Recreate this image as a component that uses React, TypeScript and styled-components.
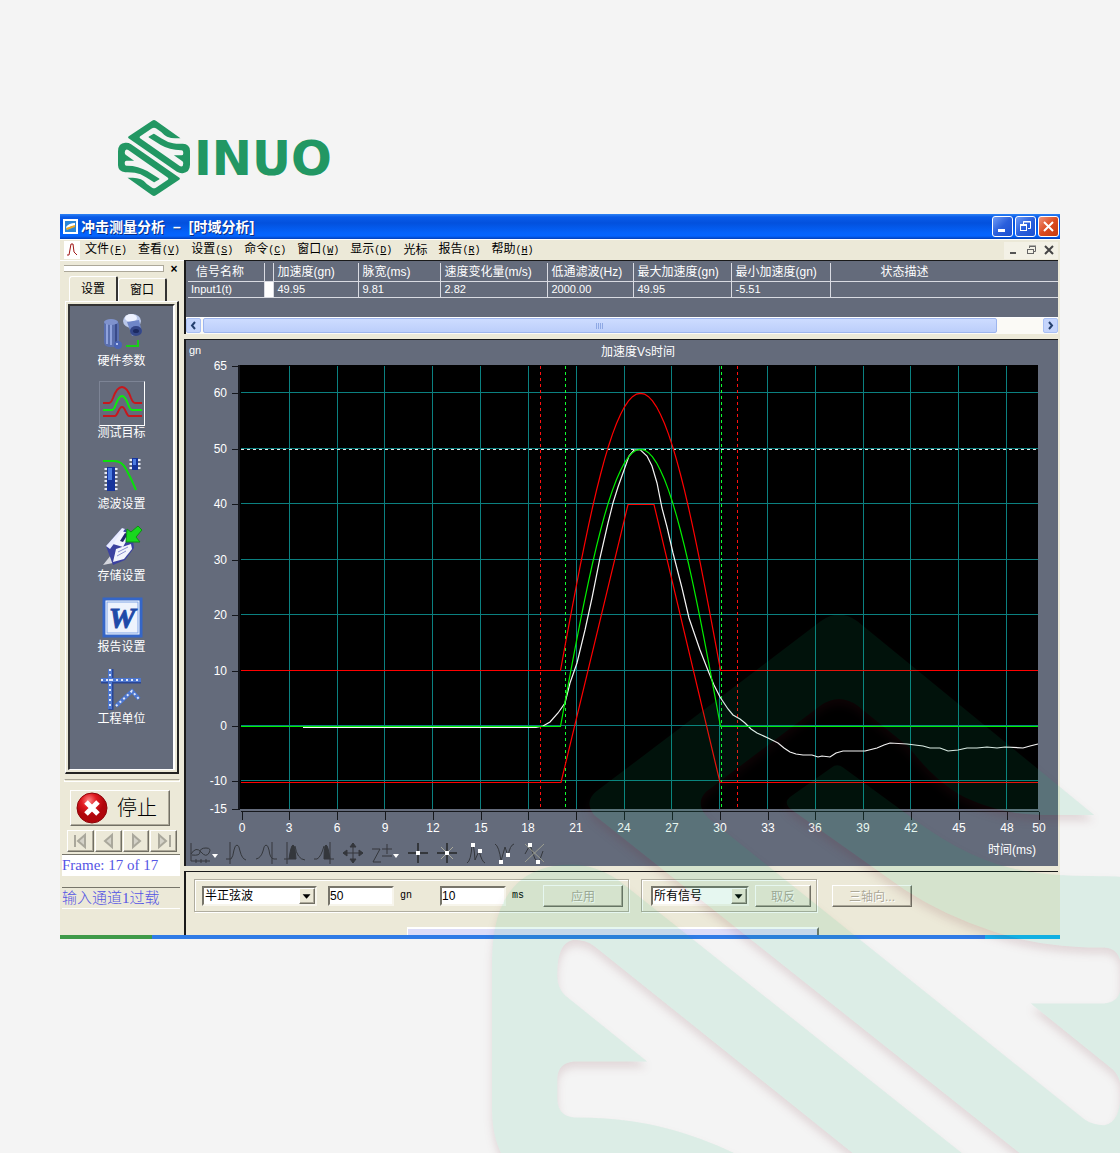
import React from "react";
import styled, { createGlobalStyle, css } from "styled-components";

const sans = `"Liberation Sans", "Noto Sans CJK SC", sans-serif`;
const mono = `"Liberation Mono", "Noto Sans CJK SC", monospace`;
const serif = `"Liberation Serif", "Noto Sans CJK SC", serif`;
const face = "#ece9d8";
const slate = "#646b7b";

const Global = createGlobalStyle`
  * { box-sizing: border-box; }
  body { margin: 0; background: #f4f4f4; font-family: ${sans}; font-size: 12px; color: #000; }
  button, input, select { font: inherit; margin: 0; }
`;

const raised = css`
  border: 1px solid;
  border-color: #fff #716f64 #716f64 #fff;
  box-shadow: inset -1px -1px #aca899;
`;
const sunken = css`
  border: 2px solid;
  border-color: #77756a #f7f5ec #f7f5ec #77756a;
`;

const Page = styled.div`
  position: relative;
  min-height: 100vh;
  padding: 120px 60px 60px;
  overflow: hidden;
`;
const Brand = styled.header`
  display: flex;
  align-items: center;
  gap: 4px;
  height: 76px;
  margin: 0 0 18px 58px;
  color: #229763;
`;
const BrandName = styled.span`
  font: bold 48px/72px "DejaVu Sans", sans-serif;
`;
const Watermark = styled.div`
  position: absolute;
  inset: 0;
  overflow: hidden;
  pointer-events: none;
  svg { position: absolute; left: 492px; top: 614px; overflow: visible; }
`;

const Window = styled.main`
  background: ${face};
`;
const TitleBar = styled.div`
  display: flex;
  align-items: center;
  gap: 2px;
  height: 25px;
  padding: 0 1px 0 3px;
  background: linear-gradient(#2f83f5 0, #0a5be8 3px, #0351dd 9px, #0463fb 19px, #0464ff 22px, #0340b8 25px);
`;
const Title = styled.h1`
  display: flex;
  flex: 1;
  gap: 8px;
  margin: 0 0 0 1px;
  color: #fff;
  font: bold 14px/20px ${sans};
  text-shadow: 1px 1px #0b2f87;
`;
const CaptionButton = styled.button<{ $close?: boolean }>`
  display: grid;
  place-items: center;
  width: 21px;
  height: 21px;
  padding: 0;
  border: 1px solid #fff;
  border-radius: 3px;
  background: ${(p) => (p.$close ? "linear-gradient(135deg,#f0937a,#dc4b20 50%,#c43a10)" : "linear-gradient(135deg,#6f9bf5,#2a5fdc 50%,#1b4fd0)")};
`;
const MenuBar = styled.nav`
  display: flex;
  align-items: center;
  height: 21px;
  padding: 0 2px 0 4px;
  border-top: 1px solid #fff;
`;
const MenuItems = styled.div`
  display: flex;
  flex: 1;
  gap: 11px;
  margin-left: 5px;
`;
const MenuItem = styled.button`
  padding: 0;
  border: 0;
  background: none;
  font: 12px/18px ${sans};
  white-space: nowrap;
  span { font: 10px/18px ${mono}; }
`;
const ChildButton = styled.button`
  display: grid;
  place-items: center;
  width: 18px;
  height: 17px;
  padding: 0;
  border: 0;
  background: #f3f1e6;
`;

const Body = styled.div`
  display: flex;
  align-items: stretch;
`;
const Side = styled.aside`
  display: flex;
  flex-direction: column;
  flex: 0 0 124px;
  border-top: 1px solid #fff;
`;
const Grip = styled.div`
  display: flex;
  align-items: center;
  gap: 4px;
  height: 15px;
  padding: 0 4px;
  &::before {
    content: "";
    flex: 1;
    height: 5px;
    border: 1px solid #aca899;
    border-width: 1px 1px 1px 0;
    background: #fff;
  }
  button { width: 12px; padding: 0; border: 0; background: none; font: bold 12px/12px ${sans}; }
`;
const Tabs = styled.div`
  display: flex;
  height: 25px;
  padding: 0 9px;
`;
const Tab = styled.button<{ $on?: boolean }>`
  width: 49px;
  padding: 0;
  margin-top: ${(p) => (p.$on ? 0 : 2)}px;
  border: solid;
  border-width: 1px 2px 0 1px;
  border-color: #fff #333 #333 #fff;
  border-radius: 3px 2px 0 0;
  background: ${face};
  font: 12px/22px ${sans};
`;
const ToolPanel = styled.div`
  margin: 0 5px;
  padding: 2px;
  border: solid;
  border-width: 1px 2px 2px 1px;
  border-color: #fff #222 #222 #fff;
`;
const ToolList = styled.div`
  display: grid;
  grid-auto-rows: 1fr;
  justify-items: center;
  height: 466px;
  padding: 3px 0 31px;
  border: solid;
  border-width: 2px 2px 1px;
  border-color: #333 #fff #fff #333;
  background: ${slate};
`;
const Tool = styled.button`
  display: flex;
  flex-direction: column;
  align-items: center;
  justify-content: flex-start;
  width: 60px;
  padding: 0;
  border: 0;
  background: none;
  color: #fff;
  font: 12px/14px ${sans};
`;
const ToolIcon = styled.span<{ $on?: boolean }>`
  width: 46px;
  height: 45px;
  border: 1px solid;
  border-color: ${(p) => (p.$on ? "#7d8495 #fff #fff #7d8495" : "transparent")};
  svg { display: block; }
`;
const Rule = styled.hr`
  height: 3px;
  margin: 5px 4px 8px;
  border: 1px solid #fff;
  border-top-color: #aca899;
`;
const Stop = styled.button`
  ${raised}
  display: flex;
  align-items: center;
  align-self: center;
  gap: 9px;
  width: 100px;
  height: 36px;
  margin-right: 4px;
  padding: 0 5px;
  background: ${face};
  font: 300 20px/32px ${serif};
`;
const Frames = styled.div`
  display: flex;
  gap: 1px;
  margin: 4px 7px 2px;
`;
const FrameButton = styled.button`
  ${raised}
  display: grid;
  place-items: center;
  flex: 1;
  height: 22px;
  padding: 0;
  background: ${face};
`;
const Status = styled.div<{ $white?: boolean }>`
  height: 22px;
  margin: 0 4px 11px 2px;
  border-top: 1px solid #77756a;
  border-bottom: 1px solid #fff;
  background: ${(p) => (p.$white ? "#fff" : face)};
  color: #5555e4;
  font: 300 15px/20px ${serif};
  white-space: nowrap;
`;

const Main = styled.div`
  display: flex;
  flex: 1;
  flex-direction: column;
  min-width: 0;
  gap: 5px;
`;
const Pane = styled.section<{ $dark?: boolean }>`
  margin-right: 2px;
  border: solid #1a1a1a;
  border-width: 1px 0 0 2px;
  background: ${(p) => (p.$dark ? slate : face)};
`;
const Signals = styled.table`
  width: calc(100% - 2px);
  margin: 2px 0 19px 2px;
  table-layout: fixed;
  border-collapse: collapse;
  color: #fff;
  th, td {
    height: 18px;
    padding: 0 0 0 4px;
    border-left: 1px solid #d9dbe2;
    border-bottom: 1px solid #d9dbe2;
    text-align: left;
    white-space: nowrap;
    overflow: hidden;
    font: 12px/16px ${sans};
  }
  td { height: 16px; font-size: 11px; line-height: 14px; }
  th:first-child { padding-left: 8px; border-left: 0; }
  td:first-child { padding-left: 3px; border-left: 0; }
  th:last-child { padding-left: 50px; }
`;
const Marker = styled.td`
  background: #fff;
`;
const ScrollBar = styled.div`
  display: flex;
  align-items: center;
  gap: 2px;
  height: 17px;
  border-top: 1px solid #fff;
  background: #fbfaf6;
`;
const ScrollButton = styled.button`
  display: grid;
  place-items: center;
  width: 15px;
  height: 15px;
  padding: 0;
  border: 1px solid #a9c0f4;
  border-radius: 2px;
  background: #c5d5fc;
`;
const Thumb = styled.div`
  display: grid;
  place-items: center;
  flex: 1;
  height: 15px;
  margin-right: 44px;
  border: 1px solid #9db5ee;
  border-radius: 2px;
  background: linear-gradient(#cddcff, #bccefa);
`;
const Plot = styled.svg`
  display: block;
  width: 100%;
  height: auto;
  font: 12px ${sans};
`;
const ToolRow = styled.div`
  display: flex;
  align-items: center;
  height: 27px;
  padding: 3px 22px 0 4px;
  gap: 7px;
`;
const CursorTool = styled.button<{ $menu?: boolean }>`
  width: ${(p) => (p.$menu ? 29 : 22)}px;
  height: 24px;
  padding: 0;
  border: 0;
  background: none;
  svg { display: block; }
`;
const AxisName = styled.span`
  margin: -10px 0 0 auto;
  color: #fff;
`;
const Controls = styled.form`
  display: flex;
  align-items: center;
  gap: 12px;
  height: 48px;
  padding: 0 8px;
`;
const Group = styled.div<{ $pad: number }>`
  display: flex;
  align-items: center;
  height: 33px;
  padding: 0 5px 0 ${(p) => p.$pad}px;
  border: 1px solid #b0ad9f;
  box-shadow: inset 1px 1px #fff, 1px 1px #fff;
`;
const Picker = styled.div<{ $w: number }>`
  ${sunken}
  position: relative;
  width: ${(p) => p.$w}px;
  height: 20px;
  select {
    display: block;
    width: 100%;
    height: 16px;
    padding: 0 18px 0 1px;
    border: 0;
    appearance: none;
    background: #fff;
    line-height: 16px;
  }
  svg { ${raised} position: absolute; top: 0; right: 0; background: ${face}; pointer-events: none; }
`;
const Field = styled.input`
  ${sunken}
  width: 66px;
  height: 20px;
  margin-left: 11px;
  padding: 0;
  background: #fff;
  & + label { width: 35px; padding-left: 6px; font: 10px/16px ${mono}; }
`;
const Push = styled.button<{ $w: number; $gap?: number }>`
  ${raised}
  width: ${(p) => p.$w}px;
  height: 22px;
  padding: 0;
  margin-left: ${(p) => p.$gap ?? 0}px;
  background: ${face};
  color: #aca899;
  text-shadow: 1px 1px #fff;
`;
const Tray = styled.div`
  width: 412px;
  max-width: 50%;
  height: 8px;
  margin: 7px 0 0 221px;
  border: solid;
  border-width: 2px 2px 0 1px;
  border-color: #fff #77756a #fff #fff;
  background: #dcdcf8;
`;
const TaskStrip = styled.div`
  display: flex;
  height: 4px;
  background: #2f7be6;
  &::before { content: ""; width: 92px; background: #3f9a48; }
  &::after { content: ""; width: 75px; margin-left: auto; background: #12b0f0; }
`;

/* One arm of the emblem; the second is the same arm turned half way round. */
const arm =
  "M835 78 Q880 45 925 78 L1505 552 L1380 552 Q1280 552 1190 510 Q1120 475 1050 385 L925 284 Q880 252 835 284 L555 495 Q525 525 560 560 " +
  "L1480 1297 Q1500 1312 1530 1312 Q1570 1305 1570 1230 Q1572 1195 1550 1175 L1350 1014 L1530 1014 Q1570 1010 1570 970 L1570 920 Q1568 880 1530 877 " +
  "Q1380 878 1260 838 Q1140 800 1040 735 L758 535 Q745 520 760 508 L862 436 Q875 425 890 436 L1060 560 Q1200 665 1330 688 Q1400 702 1500 702 L1560 703 " +
  "Q1725 715 1730 890 L1730 1270 Q1725 1480 1560 1495 Q1490 1505 1420 1458 L280 552 Q255 520 285 495 Z";

function Emblem({ width, height, ghost }: { width: number; height: number; ghost?: boolean }) {
  return (
    <svg width={width} height={height} viewBox="30 60 1700 2050" preserveAspectRatio="none" aria-hidden="true">
      {ghost && (
        <filter id="ghost" x="-10%" y="-10%" width="120%" height="120%" colorInterpolationFilters="sRGB">
          <feOffset in="SourceAlpha" dx="0" dy="14" result="o" />
          <feGaussianBlur in="o" stdDeviation="10" result="b" />
          <feComposite in="b" in2="SourceAlpha" operator="out" result="c" />
          <feColorMatrix in="c" values="0 0 0 0 .4  0 0 0 0 .1  0 0 0 0 .15  0 0 0 .13 0" result="s" />
          <feColorMatrix in="SourceGraphic" values="1 0 0 0 0  0 1 0 0 0  0 0 1 0 0  0 0 0 .1 0" result="g" />
          <feMerge><feMergeNode in="s" /><feMergeNode in="g" /></feMerge>
        </filter>
      )}
      <g fill={ghost ? "#08b470" : "currentColor"} filter={ghost ? "url(#ghost)" : undefined}>
        <path d={arm} />
        <path d={arm} transform="rotate(180 880 1085)" />
      </g>
    </svg>
  );
}

const menus: [string, string?][] = [
  ["文件", "F"], ["查看", "V"], ["设置", "S"], ["命令", "C"], ["窗口", "W"], ["显示", "D"], ["光标"], ["报告", "R"], ["帮助", "H"],
];

const Chip = ({ x, y, w, h }: { x: number; y: number; w: number; h: number }) => (
  <g>
    <path d={`M${x - 1} ${y + 1}V${y + h}M${x + w + 1} ${y + 1}V${y + h}`} stroke="#e6e9f5" strokeWidth="3" strokeDasharray="2 2" />
    <rect x={x} y={y} width={w} height={h} fill="#16349c" />
    <rect x={x + 1} y={y + 1} width={w / 2} height={h / 2} fill="#4b7be0" />
  </g>
);

const tools: { name: string; on?: boolean; art: React.ReactNode }[] = [
  {
    name: "硬件参数",
    art: (
      <>
        <rect x="4" y="10" width="15" height="27" rx="5" fill="#5a6fae" />
        <path d="M7 14v20M11 14v21" stroke="#8fa2dc" strokeWidth="2" />
        <path d="M16 14v20" stroke="#3a4b8a" strokeWidth="2" />
        <ellipse cx="11" cy="12" rx="7" ry="3" fill="#7f92cd" />
        <circle cx="18" cy="35" r="4" fill="#4a63b4" /><circle cx="17" cy="34" r="1" fill="#cfdcff" />
        <ellipse cx="32" cy="11" rx="9" ry="7" fill="#b9c7ea" /><ellipse cx="31" cy="8" rx="6" ry="4" fill="#eef2ff" />
        <path d="M27 12l12-2 3 12-10 4z" fill="#6f86c8" /><ellipse cx="36" cy="21" rx="6" ry="5" fill="#344688" /><ellipse cx="36" cy="21" rx="3" ry="2" fill="#1c2960" />
        <path d="M26 36H38V30" fill="none" stroke="#18d018" strokeWidth="2" />
      </>
    ),
  },
  {
    name: "测试目标", on: true,
    art: (
      <g fill="none" strokeWidth="2">
        <path d="M3 21h6q2 0 4-5 4-11 9-11t9 11q2 5 4 5h7" stroke="#c8171c" />
        <path d="M3 28h9q2 0 4-6 3-8 6-8t6 8q2 6 4 6h10" stroke="#0aef0a" />
        <path d="M3 34h12q1 0 3-4 2-5 4-5t4 5q2 4 3 4h13" stroke="#c8171c" />
      </g>
    ),
  },
  {
    name: "滤波设置",
    art: (
      <>
        <path d="M3 8h11q8 0 12 8 5 9 10 21" fill="none" stroke="#0ae00a" strokeWidth="2" />
        <Chip x={7} y={14} w={8} h={24} />
        <Chip x={32} y={5} w={6} h={12} />
      </>
    ),
  },
  {
    name: "存储设置",
    art: (
      <>
        <path d="M3 40l8-10 7 7z" fill="#d5d7de" />
        <path d="M6 21L22 3l10 4 2 16-9 12-12 5z" fill="#3c42a0" />
        <path d="M6 21L22 3l3 1L10 24z" fill="#e8ebff" />
        <path d="M13 19l9-13 8 3-7 13z" fill="#f2f4ff" /><path d="M20 16l5-8 3 1-5 8z" fill="#22286e" />
        <path d="M13 37l3-13 15-5 1 5-8 10z" fill="#f3f4fc" /><path d="M18 27l10-5M17 31l9-5" stroke="#8b90d0" />
        <path d="M26 17l1-13 4 3 7-6 4 4-6 7 4 5z" fill="#18d81e" stroke="#0b9212" strokeWidth="1" />
      </>
    ),
  },
  {
    name: "报告设置",
    art: (
      <>
        <rect x="4" y="3" width="37" height="37" fill="#fff" stroke="#3566c8" strokeWidth="3" />
        <rect x="7" y="6" width="31" height="31" fill="#eef3fd" stroke="#7fa3e6" />
        <text x="22" y="32" textAnchor="middle" fontSize="30" fontWeight="bold" fontStyle="italic" fontFamily="Liberation Serif, serif" fill="#1f4aa8" stroke="#1f4aa8">W</text>
      </>
    ),
  },
  {
    name: "工程单位",
    art: (
      <>
        <path d="M1 13H41M11 1V42" stroke="#2b4795" strokeWidth="5" />
        <path d="M1 12H41M10 1V41M16 38L32 23 39 31" fill="none" stroke="#4c76cf" strokeWidth="4" />
        <path d="M1 12H41M10 1V41M16 38L32 23 39 31" fill="none" stroke="#dfe8fb" strokeWidth="2" strokeDasharray="2 3" />
      </>
    ),
  },
];

const columns = [76, 9, 85, 82, 107, 86, 98, 99];

const X = (ms: number) => 241.5 + ms * 15.94;
const Y = (g: number) => 726 - g * 5.545;
const halfSine = (base: number, amp: number) => {
  const level = Math.round(Y(base)) - 0.5;
  const rise = 5.545 * amp;
  const pts: string[] = [];
  for (let i = 0; i <= 40; i++) pts.push(`${560.5 + i * 4},${(level - rise * Math.sin((Math.PI * i) / 40)).toFixed(1)}`);
  return `M241 ${level}L${pts.join("L")}H1038`;
};
const measured =
  "303,727.5 536,727.5 543,726 550,722 558,713 565,703 570,683 577,663 585,630 592,598 600,558 608,523 613,503 618,487 623,473 629,456 634,450 640,449.5 647,456 652,466 657,483 662,508 667,527 673,553 682,588 689,618 700,650 709,673 714,685 720,697 728,709 733,715 740,719 745,723 751,729 757,733 768,738 778,743 784,748 790,752 796,754 803,755 812,755 818,757 822,756 830,757 836,753 843,751 865,751 877,748 884,745 890,743 907,744 923,746 930,748 940,748 948,751 958,750 967,748 977,748 987,747 997,748 1005,747 1023,748 1030,746 1038,744";

function Chart() {
  const xs = [0, 3, 6, 9, 12, 15, 18, 21, 24, 27, 30, 33, 36, 39, 42, 45, 48, 50];
  const ys = [65, 60, 50, 40, 30, 20, 10, 0, -10, -15];
  return (
    <Plot viewBox="186 340 872 499" role="img" aria-label="加速度Vs时间">
      <rect x="240" y="365" width="798" height="444" fill="#000" />
      <g stroke="#0b8080" shapeRendering="crispEdges">
        {xs.slice(1, -1).map((v) => <path key={v} d={`M${Math.floor(X(v))}.5 366V809`} />)}
        {ys.slice(1, -1).map((v) => <path key={v} d={`M241 ${Math.round(Y(v)) - 1}.5H1038`} />)}
      </g>
      <g fill="none" strokeDasharray="3 3" shapeRendering="crispEdges">
        <path d="M241 449.5H1038" stroke="#e8e8e8" />
        <path d="M540.5 366V809M737.5 366V809" stroke="#ff1010" />
        <path d="M565.5 366V809M721.5 366V809" stroke="#10ff30" />
      </g>
      <g fill="none" strokeWidth="1.2">
        <path d={halfSine(10, 50)} stroke="#ff0000" />
        <path d="M241 782.5H561L628 504.5H654L720 782.5H1038" stroke="#ff0000" />
        <polyline points={measured} stroke="#f4f4f4" />
        <path d={halfSine(0, 50)} stroke="#00f000" transform="translate(0 1)" />
      </g>
      <g stroke="#15171c" shapeRendering="crispEdges">
        <path d="M239 365V810" strokeWidth="2" />
        <path d="M241 811.5H1039" />
        {ys.map((v) => <path key={v} d={`M232 ${Math.min(809, Math.round(Y(v)))}.5H239`} />)}
        {xs.map((v) => <path key={v} d={`M${Math.round(X(v))}.5 812V820`} />)}
      </g>
      <g fill="#fff">
        <text x="189" y="354" fontSize="11">gn</text>
        <text x="638" y="356" textAnchor="middle">加速度Vs时间</text>
        {ys.map((v) => <text key={v} x="227" y={Math.round(Y(v)) + 4} textAnchor="end">{v}</text>)}
        {xs.map((v) => <text key={v} x={Math.round(X(v))} y="832" textAnchor="middle">{v}</text>)}
      </g>
    </Plot>
  );
}

const dot = (x: number, y: number) => <rect x={x - 2} y={y - 2} width="4" height="4" fill="#fff" stroke="none" />;
const cursorTools: { name: string; menu?: boolean; art: React.ReactNode }[] = [
  { name: "曲线", menu: true, art: <><path d="M1 1V19H20M1 12Q6 4 11 10T19 11 16 6 10 10 2 13M6 17v4M11 17v4M16 17v4" /><path d="M22 12h6l-3 4z" fill="#fff" stroke="none" /></> },
  { name: "左光标", art: <path d="M4 0V22M0 17H5Q7 15 8 8 9 3 11 3T14 9Q16 17 20 18" /> },
  { name: "右光标", art: <path d="M17 0V22M1 17Q6 16 8 9 9 3 11 3T14 8Q15 17 19 17H22" /> },
  { name: "左区间", art: <><path d="M3 0V22M0 17H5M11 4Q13 17 21 18" /><path d="M5 17Q7 3 9 3T12 17z" fill="#34373c" /></> },
  { name: "右区间", art: <><path d="M17 0V22M1 17H4Q8 15 11 4M17 17H21" /><path d="M11 17Q11 3 13 3T17 17z" fill="#34373c" /></> },
  { name: "移动", art: <path d="M1 11H21M11 1V21M1 11l4-3v6zM21 11l-4-3v6zM11 1l-3 4h6zM11 21l-3-4h6z" fill="#34373c" /> },
  { name: "缩放", menu: true, art: <><path d="M1 7H9L2 20H10M11 7H21M16 2V12M11 14H21" /><path d="M22 12h6l-3 4z" fill="#fff" stroke="none" /></> },
  { name: "单光标", art: <><path d="M1 11H21M11 1V21" strokeWidth="2" />{dot(11, 11)}</> },
  { name: "跟踪光标", art: <><path d="M1 11H21M11 1V21" strokeWidth="2" /><path d="M5 5L17 17M17 5L5 17" stroke="#a9a99b" />{dot(11, 11)}</> },
  { name: "峰值", art: <><path d="M2 21Q6 19 7 3 9 2 10 18L14 9Q17 20 20 21" />{dot(8, 3)}{dot(15, 9)}</> },
  { name: "谷值", art: <><path d="M1 2Q5 4 7 19L11 5 14 14Q16 3 20 2" />{dot(7, 20)}{dot(14, 13)}</> },
  { name: "清除", art: <><path d="M2 12L7 3 12 17 16 20 20 9" /><path d="M2 2L21 20M21 2L2 20" stroke="#9c9e90" />{dot(7, 3)}{dot(15, 20)}</> },
];

const Arrow = () => (
  <svg width="16" height="16" viewBox="0 0 16 16" aria-hidden="true"><path d="M3 6h9L7.500 11z" /></svg>
);

export default function App() {
  return (
    <Page>
      <Global />
      <Brand aria-label="SINUO">
        <Emblem width={72} height={76} />
        <BrandName>INUO</BrandName>
      </Brand>
      <Window>
        <TitleBar>
          <svg width="15" height="15" viewBox="0 0 15 15" aria-hidden="true">
            <rect x="1" y="1" width="13" height="13" fill="#2b86d8" stroke="#fff" strokeWidth="2" />
            <path d="M3 8Q6 4 12 4V7Q8 6 4 11z" fill="#fff" /><path d="M3 9L12 6V8L4 11z" fill="#f3a81c" />
          </svg>
          <Title><span>冲击测量分析</span><span>–</span><span>[时域分析]</span></Title>
          <CaptionButton aria-label="最小化"><svg width="15" height="15"><rect x="3" y="10" width="7" height="3" fill="#fff" /></svg></CaptionButton>
          <CaptionButton aria-label="还原">
            <svg width="15" height="15" fill="none" stroke="#fff"><path d="M5.500 5V2.500H12.500V9.500H10M5 3H13" /><rect x="2.500" y="6.500" width="6" height="5" /><path d="M2 6H9" strokeWidth="2" /></svg>
          </CaptionButton>
          <CaptionButton $close aria-label="关闭"><svg width="15" height="15"><path d="M3 3L12 12M12 3L3 12" stroke="#fff" strokeWidth="2" /></svg></CaptionButton>
        </TitleBar>
        <MenuBar>
          <svg width="16" height="18" viewBox="0 0 16 18" aria-hidden="true"><rect width="16" height="18" fill="#fff" /><path d="M3 14H5L7 3H9L10 11 13 14" fill="none" stroke="#a01818" /></svg>
          <MenuItems>
            {menus.map(([t, k]) => (
              <MenuItem key={t}>{t}{k && <span>(<u>{k}</u>)</span>}</MenuItem>
            ))}
          </MenuItems>
          <ChildButton aria-label="最小化文档"><svg width="10" height="10"><rect x="2" y="7" width="6" height="2" fill="#555" /></svg></ChildButton>
          <ChildButton aria-label="还原文档"><svg width="11" height="10" fill="none" stroke="#666"><path d="M3.500 3V1.500H9.500V6.500H8M3 1H10" /><rect x="1.500" y="4.500" width="6" height="4" /></svg></ChildButton>
          <ChildButton aria-label="关闭文档"><svg width="10" height="10"><path d="M1 1L9 9M9 1L1 9" stroke="#444" strokeWidth="2" /></svg></ChildButton>
        </MenuBar>
        <Body>
          <Side>
            <Grip><button aria-label="关闭面板">×</button></Grip>
            <Tabs><Tab $on>设置</Tab><Tab>窗口</Tab></Tabs>
            <ToolPanel>
              <ToolList>
                {tools.map((t) => (
                  <Tool key={t.name}>
                    <ToolIcon $on={t.on}><svg width="44" height="43" viewBox="0 0 44 43" aria-hidden="true">{t.art}</svg></ToolIcon>
                    {t.name}
                  </Tool>
                ))}
              </ToolList>
            </ToolPanel>
            <Rule />
            <Stop>
              <svg width="32" height="32" viewBox="0 0 32 32" aria-hidden="true">
                <defs><radialGradient id="red" cx=".4" cy=".25"><stop offset="0" stopColor="#f88" /><stop offset=".5" stopColor="#e01a20" /><stop offset="1" stopColor="#b0060c" /></radialGradient></defs>
                <circle cx="16" cy="16" r="15" fill="url(#red)" stroke="#8c0509" /><path d="M10 10L22 22M22 10L10 22" stroke="#fff" strokeWidth="5" />
              </svg>
              停止
            </Stop>
            <Frames>
              {[["首帧", "M6 4V16M16 4V16L9 10z"], ["上一帧", "M15 4V16L8 10z"], ["下一帧", "M8 4V16L15 10z"], ["末帧", "M6 4V16L13 10zM17 4V16"]].map(([n, d]) => (
                <FrameButton key={n} aria-label={n}><svg width="22" height="20"><path d={d} fill="#d4d2c8" stroke="#aaa89c" strokeWidth="2" /></svg></FrameButton>
              ))}
            </Frames>
            <Status $white>Frame: 17 of 17</Status>
            <Status>输入通道1过载</Status>
          </Side>
          <Main>
            <Pane $dark>
              <Signals>
                <colgroup>{columns.map((w, i) => <col key={i} width={w} />)}<col /></colgroup>
                <thead>
                  <tr><th>信号名称</th><th /><th>加速度(gn)</th><th>脉宽(ms)</th><th>速度变化量(m/s)</th><th>低通滤波(Hz)</th><th>最大加速度(gn)</th><th>最小加速度(gn)</th><th>状态描述</th></tr>
                </thead>
                <tbody>
                  <tr><td>Input1(t)</td><Marker /><td>49.95</td><td>9.81</td><td>2.82</td><td>2000.00</td><td>49.95</td><td>-5.51</td><td /></tr>
                </tbody>
              </Signals>
              <ScrollBar>
                <ScrollButton aria-label="向左滚动"><svg width="9" height="9"><path d="M6 1L3 4.500 6 8" fill="none" stroke="#25406e" strokeWidth="2" /></svg></ScrollButton>
                <Thumb><svg width="8" height="6"><path d="M.5 0V6M2.500 0V6M4.500 0V6M6.500 0V6" stroke="#8ea8e4" /></svg></Thumb>
                <ScrollButton aria-label="向右滚动"><svg width="9" height="9"><path d="M3 1L6 4.500 3 8" fill="none" stroke="#25406e" strokeWidth="2" /></svg></ScrollButton>
              </ScrollBar>
            </Pane>
            <Pane $dark>
              <Chart />
              <ToolRow>
                {cursorTools.map((t) => (
                  <CursorTool key={t.name} $menu={t.menu} aria-label={t.name}>
                    <svg width={t.menu ? 29 : 22} height="24" fill="none" stroke="#34373c">{t.art}</svg>
                  </CursorTool>
                ))}
                <AxisName>时间(ms)</AxisName>
              </ToolRow>
            </Pane>
            <Pane>
              <Controls onSubmit={(e) => e.preventDefault()}>
                <Group $pad={7}>
                  <Picker $w={115}><select aria-label="波形"><option>半正弦波</option></select><Arrow /></Picker>
                  <Field id="peak" defaultValue="50" /><label htmlFor="peak">gn</label>
                  <Field id="width" defaultValue="10" /><label htmlFor="width">ms</label>
                  <Push $w={80} $gap={2} disabled>应用</Push>
                </Group>
                <Group $pad={9}>
                  <Picker $w={98}><select aria-label="信号"><option>所有信号</option></select><Arrow /></Picker>
                  <Push $w={56} $gap={6} disabled>取反</Push>
                </Group>
                <Push $w={80} $gap={3} disabled>三轴向...</Push>
              </Controls>
              <Tray />
            </Pane>
          </Main>
        </Body>
        <TaskStrip />
      </Window>
      <Watermark><Emblem width={694} height={837} ghost /></Watermark>
    </Page>
  );
}
